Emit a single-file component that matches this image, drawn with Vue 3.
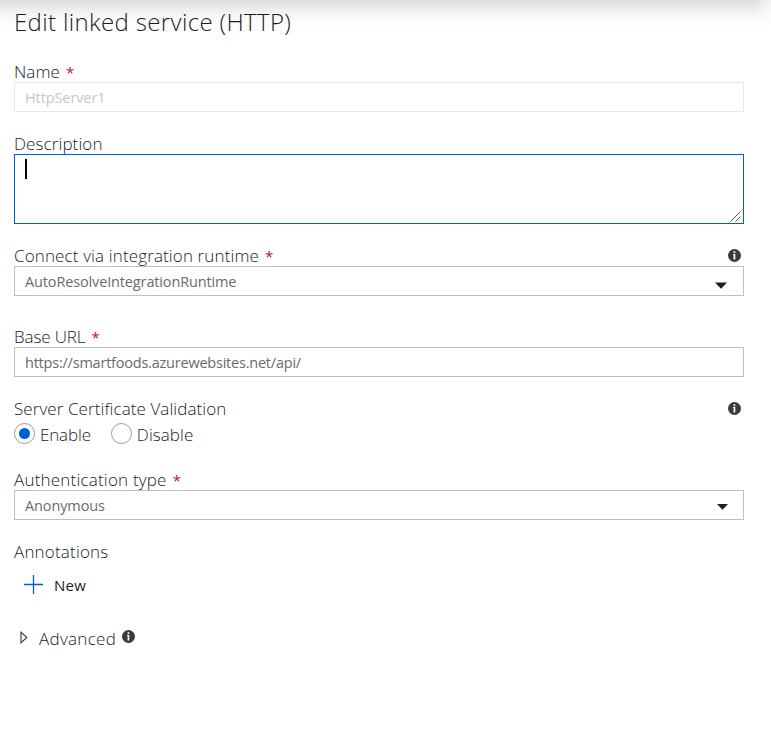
<script setup>
import { ref } from 'vue'

const certValidation = ref('Enable')
const options = ['Enable', 'Disable']
</script>

<template>
  <main class="panel">
    <h1 class="title"><span class="t-title">Edit linked service (HTTP)</span></h1>

    <section class="field">
      <div class="label"><span class="t-name">Name</span><span class="req">*</span></div>
      <div class="box disabled"><span class="v-name">HttpServer1</span></div>
    </section>

    <section class="field">
      <div class="label"><span class="t-desc">Description</span></div>
      <div class="area">
        <i class="caret"></i>
        <svg class="grip" width="11" height="11" viewBox="0 0 11 11"><path d="M.5 10.5l10-10M5.500 10.500l5-5" /></svg>
      </div>
    </section>

    <section class="field runtime">
      <div class="label">
        <span class="t-conn">Connect via integration runtime</span><span class="req">*</span>
        <svg class="info" width="13" height="13" viewBox="0 0 13 13"><circle cx="6.500" cy="6.500" r="6.500" /><path d="M5.600 2.300h1.700v1.600H5.600zM5 5h2.300v5.500H5.600V5.900H5z" /></svg>
      </div>
      <div class="box">
        <span class="v-conn">AutoResolveIntegrationRuntime</span>
        <svg class="arrow first" width="12" height="7" viewBox="0 0 12 7"><path d="M0 .5h12L6 6.700z" /></svg>
      </div>
    </section>

    <section class="field">
      <div class="label"><span class="t-base">Base URL</span><span class="req">*</span></div>
      <div class="box"><span class="v-url">https://smartfoods.azurewebsites.net/api/</span></div>
    </section>

    <section class="field">
      <div class="label">
        <span class="t-cert">Server Certificate Validation</span>
        <svg class="info" width="13" height="13" viewBox="0 0 13 13"><circle cx="6.500" cy="6.500" r="6.500" /><path d="M5.600 2.300h1.700v1.600H5.600zM5 5h2.300v5.500H5.600V5.900H5z" /></svg>
      </div>
      <div class="radios">
        <label v-for="o in options" :key="o" class="radio" @click="certValidation = o">
          <i class="ring" :class="{ on: certValidation === o }"></i><span :class="'r-' + o.toLowerCase()">{{ o }}</span>
        </label>
      </div>
    </section>

    <section class="field">
      <div class="label"><span class="t-auth">Authentication type</span><span class="req">*</span></div>
      <div class="box">
        <span class="v-auth">Anonymous</span>
        <svg class="arrow" width="11" height="6" viewBox="0 0 11 6"><path d="M0 0h11L5.500 5.800z" /></svg>
      </div>
    </section>

    <div class="label"><span class="t-ann">Annotations</span></div>
    <div class="new">
      <svg width="19" height="19" viewBox="0 0 19 19"><path d="M9.500 0v19M0 9.500h19" /></svg>
      <span class="t-new">New</span>
    </div>

    <div class="advanced">
      <svg class="tri" width="8" height="13" viewBox="0 0 8 13"><path d="M1 1.200v10.600L6.800 6.500z" /></svg>
      <span class="t-adv">Advanced</span>
      <svg class="info" width="13" height="13" viewBox="0 0 13 13"><circle cx="6.500" cy="6.500" r="6.500" /><path d="M5.600 2.300h1.700v1.600H5.600zM5 5h2.300v5.500H5.600V5.900H5z" /></svg>
    </div>
  </main>
</template>

<style>
body { background: #fff; overflow: hidden; }
</style>

<style scoped>
.panel {
  box-sizing: border-box;
  height: 743px;
  padding: 7px 27px 0 14px;
  font-family: "Open Sans", "Noto Sans", sans-serif;
  font-weight: 300;
  color: #1c1c1c;
  background:
    linear-gradient(to left, rgba(255, 255, 255, .6), rgba(255, 255, 255, 0) 18px),
    linear-gradient(#e0e0e0 0, #e3e3e3 4px, #f0f0f0 11px, #fafafa 19px, #fff 28px);
}
.title { margin: 0 0 21px; height: 30px; line-height: 30px; font-size: 24px; font-weight: 300; white-space: nowrap; }
.t-title { letter-spacing: .35px; }
.t-name { letter-spacing: .1px; }
.t-desc { letter-spacing: .1px; }
.t-conn { letter-spacing: .13px; }
.t-base { letter-spacing: -.12px; }
.t-cert { letter-spacing: .08px; }
.t-auth { letter-spacing: .2px; }
.t-ann { letter-spacing: .18px; }
.t-adv { letter-spacing: .3px; }
.t-new { letter-spacing: .3px; }
.v-name { letter-spacing: -.1px; }
.v-conn { letter-spacing: -.14px; }
.v-url { letter-spacing: -.22px; }
.v-auth { letter-spacing: -.12px; }
.r-enable { letter-spacing: -.15px; }
.r-disable { letter-spacing: .05px; }
.field { margin-bottom: 18px; }
.runtime { margin-bottom: 27px; }
.label { display: flex; align-items: center; height: 24px; line-height: 24px; font-size: 17px; white-space: nowrap; }
.label span { position: relative; top: 2px; }
.label .info { margin: 3px 3px 0 auto; }
.req { margin-left: 6px; color: #c50f1f; font-size: 15px; font-weight: 400; }
.box {
  box-sizing: border-box; display: flex; align-items: center; justify-content: space-between;
  height: 30px; padding: 0 11px 0 10px; border: 1px solid #c0c0c0; background: #fff;
  font-size: 14.500px; font-weight: 400; color: #6b6b6b; white-space: nowrap;
}
.disabled { border-color: #e8e8e8; color: #c6c6c6; }
.arrow { fill: #1e1e1e; margin: 3px 4px 0 0; }
.arrow.first { margin: 8px 5px 0 0; }
.area { box-sizing: border-box; display: flex; justify-content: space-between; height: 70px; padding: 4px 2px 1px 10px; border: 1px solid #015cda; background: #fff; }
.caret { width: 2px; height: 20px; background: #000; }
.grip { align-self: flex-end; fill: none; stroke: #555; stroke-width: 1; }
.info circle { fill: #3b3b3b; }
.info path { fill: #fff; }
.radios { display: flex; height: 25px; padding-top: 4px; gap: 20px; margin-bottom: -1px; font-size: 17px; }
.field:has(.radios) { margin-bottom: 19px; }
.radio { display: flex; align-items: center; height: 21px; gap: 5px; line-height: 21px; }
.radio span { position: relative; top: 1px; }
.ring { box-sizing: border-box; display: flex; align-items: center; justify-content: center; width: 21px; height: 21px; border: 1px solid #999; border-radius: 50%; background: #fff; }
.ring.on::after { content: ""; width: 11px; height: 11px; border-radius: 50%; background: #015cda; }
.new { display: flex; align-items: center; gap: 11px; height: 22px; margin-top: 12px; padding-left: 10px; font-size: 15px; font-weight: 400; }
.new svg { fill: none; stroke: #015cda; stroke-width: 1.300; margin-bottom: 2px; }
.advanced { display: flex; align-items: center; height: 24px; margin-top: 30px; padding-left: 6px; font-size: 17px; }
.tri { fill: none; stroke: #333; stroke-width: 1.100; margin: -2px 11px 0 0; }
.advanced .info { margin: -4px 0 0 6px; }
</style>
